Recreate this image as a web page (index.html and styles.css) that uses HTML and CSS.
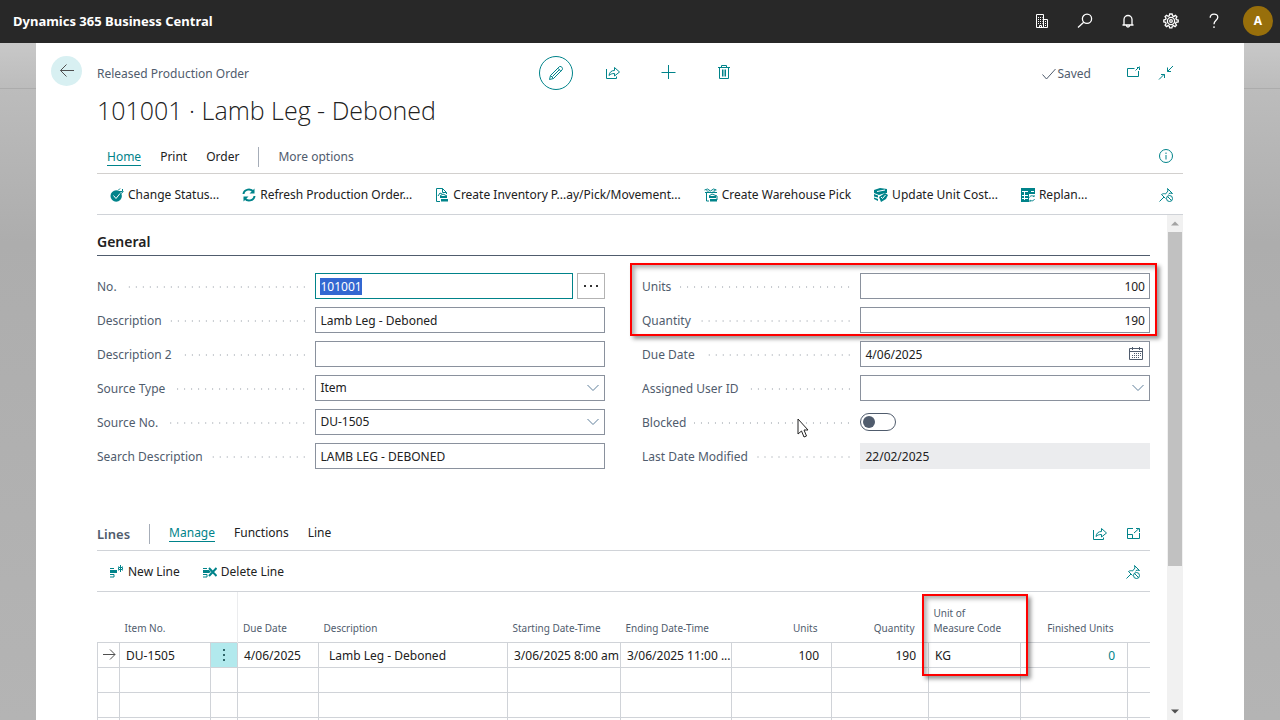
FILE: index.html
```html
<!DOCTYPE html>
<html lang="en">
<head>
    <meta charset="UTF-8">
    <meta name="viewport" content="width=device-width, initial-scale=1.0">
    <title>Released Production Order - Dynamics 365 Business Central</title>
    <link rel="stylesheet" href="styles.css">
</head>
<body>
    <!-- Shared icons -->
    <svg class="sprite" aria-hidden="true">
        <symbol id="i-share" viewBox="0 0 16 16">
            <path d="M1.500 4v9.500h10v-2M4 10.500c.5-3.500 2.500-5 5.500-5V2.500L14.500 7l-5 4V8.500c-2.500 0-4 .5-5.500 2z"/>
        </symbol>
        <symbol id="i-pin" viewBox="0 0 16 16">
            <path d="M1.500 14.500 6 10M3.500 7.500l4 4M3.500 7.500c1.500-1 3-1 4-.5l2.500-3-.5-2.500 5 5-2.500-.5-1.500 1.200"/>
            <circle cx="11.500" cy="11.500" r="3"/>
            <path d="m9.500 9.500 4 4"/>
        </symbol>
        <symbol id="i-chevron" viewBox="0 0 12 8">
            <path d="m.5 1 5.500 5.500L11.500 1"/>
        </symbol>
    </svg>

    <header class="topbar">
        <b class="brand">Dynamics 365 Business Central</b>
        <nav class="topbar-icons">
            <button type="button" aria-label="Company">
                <svg class="icon" viewBox="0 0 16 16"><path d="M2.500 1.500h7v13h-7zM9.500 6.500h4v8h-4M5.500 14.500v-2h2v2"/><path stroke-dasharray="1 1" d="M4 4.500h4.500M4 6.500h4.500M4 8.500h4.500M4 10.500h4.500M11.500 8v5"/></svg>
            </button>
            <button type="button" aria-label="Search">
                <svg class="icon bold" viewBox="0 0 16 16"><circle cx="10" cy="5.800" r="4.600"/><path d="M6.700 9.200 1 14.500"/></svg>
            </button>
            <button type="button" aria-label="Notifications">
                <svg class="icon bold" viewBox="0 0 16 16"><path d="M2.500 12h11M4 12V6.500a4 4 0 0 1 8 0V12M6.500 12.500c0 2 3 2 3 0"/></svg>
            </button>
            <button type="button" aria-label="Settings">
                <svg class="icon bold" viewBox="0 0 16 16"><path d="m6.700 1-.4 1.800-1.200.5-1.600-1-1.400 1.400 1 1.600-.5 1.200L.8 7v2l1.800.4.5 1.200-1 1.600 1.400 1.400 1.600-1 1.200.5.400 1.800h2.200l.4-1.800 1.200-.5 1.600 1 1.400-1.400-1-1.600.5-1.200L15.200 9V7l-1.800-.4-.5-1.200 1-1.600-1.400-1.400-1.600 1-1.200-.5L9.100 1z"/><circle cx="8" cy="8" r="3.600"/><circle cx="8" cy="8" r="1.300"/></svg>
            </button>
            <button type="button" aria-label="Help">
                <svg class="icon bold" viewBox="0 0 16 16"><path d="M4.200 4.800c0-5 7.600-4.800 7.600-.6 0 3-3.800 3.300-3.800 7M8 13.200V15"/></svg>
            </button>
        </nav>
        <button type="button" class="avatar">A</button>
    </header>

    <div class="backdrop">
        <main class="page">
            <div class="gutter">
                <button type="button" class="back-button" aria-label="Back">
                    <svg class="icon" viewBox="0 0 16 16"><path d="M15 7.500H1.500M7.500 1.500l-6 6 6 6"/></svg>
                </button>
            </div>

            <div class="content">
                <div class="page-header">
                    <span class="page-type">Released Production Order</span>
                    <div class="page-tools">
                        <button type="button" class="edit-button" aria-label="Edit">
                            <svg class="icon" viewBox="0 0 16 16"><path d="m1.500 14.500 1-4L11 2c1.500-1.800 4.800 1 3 3l-8.500 8.500zM2.500 10.500l3 3M9.800 3.200l3 3M4.500 11.500l7-7"/></svg>
                        </button>
                        <button type="button" aria-label="Share"><svg class="icon"><use href="#i-share"/></svg></button>
                        <button type="button" aria-label="New"><svg class="icon" viewBox="0 0 16 16"><path d="M7.500 0v14M.5 7.500h14"/></svg></button>
                        <button type="button" aria-label="Delete"><svg class="icon" viewBox="0 0 16 16"><path d="M1 2.500h12M4.500 2V.5h5V2M2.500 2.500v11h9v-11M5.500 4.500v7M7 4.500v7M8.500 4.500v7"/></svg></button>
                    </div>
                    <div class="page-status">
                        <span class="saved"><svg class="icon" viewBox="0 0 16 16"><path d="m1.500 8.500 4 4.500 9-10"/></svg>Saved</span>
                        <button type="button" aria-label="Open in new window"><svg class="icon" viewBox="0 0 16 16"><path d="M9.500 3.500h-7v8h11V6M10.500 5.500l4-4M12 2.500h2.500V5"/></svg></button>
                        <button type="button" aria-label="Collapse"><svg class="icon" viewBox="0 0 16 16"><path d="m15 1-5.500 5.500M9.500 2.500v4H13M1 14.500l5.500-5.500M3 9.500h3.500V13"/></svg></button>
                    </div>
                </div>

                <h1 class="page-title">101001 · Lamb Leg - Deboned</h1>

                <nav class="tabs">
                    <a href="#" class="tab active">Home</a>
                    <a href="#" class="tab">Print</a>
                    <a href="#" class="tab">Order</a>
                    <span class="divider"></span>
                    <a href="#" class="tab muted">More options</a>
                    <button type="button" class="push-right" aria-label="Details"><svg class="icon" viewBox="0 0 16 16"><circle cx="8" cy="7" r="6.500"/><path d="M8 6v4.500M8 3.500V5"/></svg></button>
                </nav>

                <div class="actions">
                    <button type="button" class="action">
                        <svg class="icon small" viewBox="0 0 14 14"><circle class="fill" cx="6.200" cy="8" r="5.700"/><path class="white" d="m3.500 7.500 2.500 3 4-5"/><path d="m8 2.500 2-2M9 3.500h3.500V1M11 5.500l2.500-2"/></svg>Change Status...
                    </button>
                    <button type="button" class="action">
                        <svg class="icon small thick" viewBox="0 0 14 14"><path d="M1.500 6c.5-5 7.500-6 10-2M12.500 8c-.5 5-7.500 6-10 2"/><path class="fill" d="M12.500.5v5h-5zM1.500 13.500v-5h5z"/></svg>Refresh Production Order...
                    </button>
                    <button type="button" class="action">
                        <svg class="icon small" viewBox="0 0 14 14"><path d="M5 13.500H1.500V.5h6l4 4V6M7.500.5v4h4M3 8l2-3 2 1"/><path class="fill" d="M5 8h7v2H5zM6 11h7v2.500H6z"/><path d="m5 8 3-2 4 2"/></svg>Create Inventory P...ay/Pick/Movement...
                    </button>
                    <button type="button" class="action">
                        <svg class="icon small" viewBox="0 0 14 14"><path d="m.5 2 3-1 3 2 3-2 3 1M1 4.500h12M2.500 5v8H5"/><path class="fill" d="M5 8h7v2H5zM6 11h7v2.500H6zM2 2l4 1.500H3zM8 3.500l4-2-1 2z"/><path d="m5 8 3-2 5 2v4"/></svg>Create Warehouse Pick
                    </button>
                    <button type="button" class="action">
                        <svg class="icon small" viewBox="0 0 14 14"><path class="fill" d="m0 2 6-2 7 1v4h-2L5 7 0 5zM0 6l4 1.500v2L0 8.500zM0 9.500l4 1.500v2l-4-2zM5 9l6-4 3 2-2 4-5 3z"/><path class="white" d="m3 3.500 8-1.500M7 9l1.500 1.500 3-3.500"/></svg>Update Unit Cost...
                    </button>
                    <button type="button" class="action">
                        <svg class="icon small" viewBox="0 0 14 14"><path class="fill" d="M0 0h14v6H8v8H0z"/><path class="white" d="M1 3.500h6M1 7.500h6M1 10.500h6M3.500 3v9M10 3.500h3"/><path d="M8.500 9.500c1-2.500 3.500-2 4.500-.5V7M13.500 11c-1 2.500-3.500 2-4.500 1v2"/></svg>Replan...
                    </button>
                    <button type="button" class="push-right" aria-label="Unpin"><svg class="icon"><use href="#i-pin"/></svg></button>
                </div>

                <div class="scroll-area">
                    <div class="scroll-content">
                        <section>
                            <h2 class="section-title">General</h2>
                            <form class="fields">
                                <div class="field-column">
                                    <div class="field">
                                        <label for="no">No.</label>
                                        <div class="control with-assist">
                                            <input type="text" id="no" value="101001" autofocus>
                                            <button type="button" class="assist" aria-label="Choose"><svg viewBox="0 0 16 4"><path d="M1 1h2v2H1zM7 1h2v2H7zM13 1h2v2h-2z"/></svg></button>
                                        </div>
                                    </div>
                                    <div class="field">
                                        <label for="description">Description</label>
                                        <div class="control"><input type="text" id="description" value="Lamb Leg - Deboned"></div>
                                    </div>
                                    <div class="field">
                                        <label for="description2">Description 2</label>
                                        <div class="control"><input type="text" id="description2"></div>
                                    </div>
                                    <div class="field">
                                        <label for="source-type">Source Type</label>
                                        <div class="control">
                                            <select id="source-type"><option>Item</option></select>
                                            <svg class="chevron"><use href="#i-chevron"/></svg>
                                        </div>
                                    </div>
                                    <div class="field">
                                        <label for="source-no">Source No.</label>
                                        <div class="control">
                                            <select id="source-no"><option>DU-1505</option></select>
                                            <svg class="chevron"><use href="#i-chevron"/></svg>
                                        </div>
                                    </div>
                                    <div class="field">
                                        <label for="search-description">Search Description</label>
                                        <div class="control"><input type="text" id="search-description" value="LAMB LEG - DEBONED"></div>
                                    </div>
                                </div>

                                <div class="field-column">
                                    <div class="highlight-group">
                                        <div class="field">
                                            <label for="units">Units</label>
                                            <div class="control"><input type="text" class="number" id="units" value="100"></div>
                                        </div>
                                        <div class="field">
                                            <label for="quantity">Quantity</label>
                                            <div class="control"><input type="text" class="number" id="quantity" value="190"></div>
                                        </div>
                                        <span class="highlight"></span>
                                    </div>
                                    <div class="field">
                                        <label for="due-date">Due Date</label>
                                        <div class="control">
                                            <input type="text" id="due-date" value="4/06/2025">
                                            <svg class="calendar" viewBox="0 0 16 16"><path d="M1.500 2.500h13v11h-13zM1.500 5.500h13M4.500 1v3M11.500 1v3"/><path stroke-dasharray="1 1" d="M6 7.500h7M4 9.500h9M4 11.500h7"/></svg>
                                        </div>
                                    </div>
                                    <div class="field">
                                        <label for="assigned-user">Assigned User ID</label>
                                        <div class="control">
                                            <select id="assigned-user"><option></option></select>
                                            <svg class="chevron"><use href="#i-chevron"/></svg>
                                        </div>
                                    </div>
                                    <div class="field">
                                        <label for="blocked">Blocked</label>
                                        <div class="control"><input type="checkbox" class="toggle" id="blocked"></div>
                                        <svg class="pointer" viewBox="0 0 12 20"><path d="M1 1v15l3.500-3 2.500 6 2.500-1-2.500-6H11z"/></svg>
                                    </div>
                                    <div class="field">
                                        <label for="last-modified">Last Date Modified</label>
                                        <div class="control"><input type="text" id="last-modified" value="22/02/2025" readonly></div>
                                    </div>
                                </div>
                            </form>
                        </section>

                        <section class="lines">
                            <div class="lines-header">
                                <h2 class="lines-title">Lines</h2>
                                <span class="divider"></span>
                                <a href="#" class="tab active">Manage</a>
                                <a href="#" class="tab">Functions</a>
                                <a href="#" class="tab">Line</a>
                                <button type="button" class="push-right" aria-label="Share"><svg class="icon"><use href="#i-share"/></svg></button>
                                <button type="button" aria-label="Expand"><svg class="icon" viewBox="0 0 16 16"><path d="M14.500 7v5.500h-12v-10H8M2.500 8.500h5v4M9 7l5-4.500M11 2.500h3.500V6"/></svg></button>
                            </div>

                            <div class="actions">
                                <button type="button" class="action">
                                    <svg class="icon small" viewBox="0 0 14 14"><path class="fill" d="M0 5h7v3H0z"/><path d="M0 3.500h4M0 9.500h4V12H0M8.500 1.500l4 4M12.500 1.500l-4 4M10.500 0v7M8.500 2.500h4v2h-4z"/></svg>New Line
                                </button>
                                <button type="button" class="action">
                                    <svg class="icon small" viewBox="0 0 14 14"><path class="fill" d="M0 5h6l2 2-2 1H0z"/><path d="M0 3.500h4M0 9.500h4V12H0"/><path class="cross" d="m6 3 7.500 8M13.500 3 6 11"/></svg>Delete Line
                                </button>
                                <button type="button" class="push-right" aria-label="Unpin"><svg class="icon"><use href="#i-pin"/></svg></button>
                            </div>

                            <table class="lines-table">
                                <colgroup>
                                    <col class="c-marker"><col class="c-item"><col class="c-menu"><col class="c-due"><col class="c-desc"><col class="c-start">
                                    <col class="c-end"><col class="c-units"><col class="c-qty"><col class="c-uom"><col class="c-finished"><col>
                                </colgroup>
                                <thead>
                                    <tr>
                                        <th></th>
                                        <th>Item No.</th>
                                        <th class="frozen"></th>
                                        <th>Due Date</th>
                                        <th>Description</th>
                                        <th>Starting Date-Time</th>
                                        <th>Ending Date-Time</th>
                                        <th class="number">Units</th>
                                        <th class="number">Quantity</th>
                                        <th class="marked">Unit of<br>Measure Code<span class="highlight"></span></th>
                                        <th class="number">Finished Units</th>
                                        <th></th>
                                    </tr>
                                </thead>
                                <tbody>
                                    <tr>
                                        <td class="center"><svg class="icon row-arrow" viewBox="0 0 14 14"><path d="M1 6.500h12M8 1.500l5 5-5 5"/></svg></td>
                                        <td>DU-1505</td>
                                        <td class="row-menu"><button type="button" aria-label="Row menu"><svg viewBox="0 0 4 14"><path d="M1 1h2v2H1zM1 6h2v2H1zM1 11h2v2H1z"/></svg></button></td>
                                        <td>4/06/2025</td>
                                        <td class="indent">Lamb Leg - Deboned</td>
                                        <td>3/06/2025 8:00 am</td>
                                        <td>3/06/2025 11:00 ...</td>
                                        <td class="number">100</td>
                                        <td class="number">190</td>
                                        <td>KG</td>
                                        <td class="number"><a href="#">0</a></td>
                                        <td></td>
                                    </tr>
                                    <tr><td></td><td></td><td></td><td></td><td></td><td></td><td></td><td></td><td></td><td></td><td></td><td></td></tr>
                                    <tr><td></td><td></td><td></td><td></td><td></td><td></td><td></td><td></td><td></td><td></td><td></td><td></td></tr>
                                    <tr><td></td><td></td><td></td><td></td><td></td><td></td><td></td><td></td><td></td><td></td><td></td><td></td></tr>
                                </tbody>
                            </table>
                        </section>
                    </div>

                    <div class="scrollbar" aria-hidden="true">
                        <svg class="up" viewBox="0 0 16 16"><path d="m4 10 4-4 4 4z"/></svg>
                        <div class="track"><div class="thumb"></div></div>
                        <svg class="down" viewBox="0 0 16 16"><path d="m4 6 4 4 4-4z"/></svg>
                    </div>
                </div>
            </div>
        </main>
    </div>

<script src="script.js"></script>
</body>
</html>
```

FILE: script.js
```js
// Open the card with the number ready to be typed over
const noField = document.getElementById("no");
noField.focus();
noField.select();
```

FILE: styles.css
```css
* {
    box-sizing: border-box;
}

body {
    margin: 0;
    height: 100vh;
    display: flex;
    flex-direction: column;
    overflow: hidden;
    font-family: "Segoe UI", "Noto Sans", sans-serif;
    font-size: 12px;
    line-height: 16px;
    color: #212121;
}

button,
input,
select {
    font: inherit;
    color: inherit;
}

button {
    display: flex;
    align-items: center;
    justify-content: center;
    padding: 0;
    border: none;
    background: none;
    color: #00838a; /* Teal used by every action icon */
    cursor: pointer;
}

a {
    color: inherit;
    text-decoration: none;
}

.sprite {
    display: none;
}

.icon {
    width: 16px;
    height: 16px;
    flex: none;
    fill: none;
    stroke: currentColor;
}

.icon.small {
    width: 14px;
    height: 14px;
    color: #00838a;
}

.icon.bold {
    stroke-width: 1.3;
}

.icon.thick {
    stroke-width: 2;
}

.icon .fill {
    fill: currentColor;
    stroke: none;
}

.icon .white {
    stroke: white;
}

.icon .cross {
    stroke-width: 2;
}

.push-right {
    margin-left: auto;
}

/* Top bar */
.topbar {
    display: flex;
    align-items: center;
    flex: none;
    height: 43px;
    padding: 0 7px 2px 13px;
    background-color: #282828;
    color: white;
}

.brand {
    font-size: 13px;
    font-weight: 700;
}

.topbar-icons {
    display: flex;
    margin-left: auto;
    margin-right: 8px;
}

.topbar-icons button {
    width: 43px;
    height: 41px;
    color: white;
}

.avatar {
    width: 30px;
    height: 30px;
    border-radius: 50%;
    background-color: #986f0b;
    color: white;
    font-weight: 700;
}

/* Dimmed page behind the card */
.backdrop {
    flex: 1;
    min-height: 0;
    display: flex;
    padding: 0 36px;
    background:
        linear-gradient(#acacac, #acacac) no-repeat 0 45px / 100% 1px,
        linear-gradient(#c8c8c8, #bcbcbc 45px, #adadad 200px, #b4b4b4);
}

.page {
    flex: 1;
    min-width: 0;
    display: flex;
    padding-right: 61px;
    background-color: white;
}

.gutter {
    width: 61px;
    flex: none;
    padding: 13px 15px;
}

.back-button {
    width: 31px;
    height: 30px;
    border-radius: 50%;
    background-color: #d8f0f2;
    color: #505050;
}

.content {
    flex: 1;
    min-width: 0;
    display: flex;
    flex-direction: column;
    padding-top: 13px;
}

.page-header {
    display: grid;
    grid-template-columns: 1fr auto 1fr;
    align-items: center;
    height: 34px;
    color: #505c6d;
}

.page-type,
.saved {
    padding-top: 2px;
}

.page-tools {
    display: flex;
    align-items: center;
    gap: 24px;
}

.page-tools button {
    width: 32px;
    height: 32px;
}

.page-tools .edit-button {
    width: 34px;
    height: 34px;
    border: 1px solid #00838a;
    border-radius: 50%;
}

.page-status {
    display: flex;
    align-items: center;
    justify-content: flex-end;
    padding-right: 9px;
}

.saved {
    display: flex;
    align-items: center;
    margin-right: 34px;
}

.page-status button + button {
    margin-left: 17px;
}

.page-title {
    margin: 0;
    font-family: "Segoe UI", "Open Sans", sans-serif;
    font-size: 25px;
    font-weight: 300;
    line-height: 40px;
}

/* Tabs */
.tabs {
    display: flex;
    align-items: center;
    gap: 19px;
    height: 44px;
    padding: 11px 9px 0 10px;
    border-bottom: 1px solid #d2d0ce;
}

.tab {
    border-bottom: 1px solid transparent;
}

.tab.active {
    color: #00838a;
    border-bottom-color: #00838a;
}

.tab.muted {
    color: #505c6d;
}

.divider {
    width: 1px;
    height: 20px;
    background-color: #a6adb8;
}

/* Action strip */
.actions {
    display: flex;
    align-items: center;
    gap: 23px;
    height: 41px;
    padding: 2px 9px 0 13px;
    border-bottom: 1px solid #d0d3d8;
}

.action {
    gap: 4px;
    color: #212121;
    white-space: nowrap;
}

/* Scrolling part of the card */
.scroll-area {
    flex: 1;
    min-height: 0;
    display: flex;
}

.scroll-content {
    flex: 1;
    min-width: 0;
    padding-right: 17px;
    overflow: hidden;
}

.scrollbar {
    width: 16px;
    display: flex;
    flex-direction: column;
    background-color: #f1f1f1;
}

.scrollbar svg {
    width: 16px;
    height: 17px;
    fill: #505050;
}

.scrollbar .up {
    fill: #a3a3a3;
}

.track {
    flex: 1;
    padding: 0 1px;
}

.thumb {
    height: 71%;
    background-color: #c1c1c1;
}

.section-title {
    margin: 0;
    padding-top: 14px;
    border-bottom: 1px solid #505c6d;
    font-size: 14px;
    font-weight: 600;
    line-height: 26px;
}

/* Fields */
.fields {
    display: grid;
    grid-template-columns: 1fr 1fr;
    column-gap: 37px;
    padding-top: 17px;
}

.field-column,
.highlight-group {
    display: flex;
    flex-direction: column;
    gap: 8px;
}

.field {
    position: relative;
    display: flex;
    align-items: center;
    height: 26px;
}

.field label {
    display: flex;
    align-items: center;
    width: 43%;
    padding-top: 2px;
    color: #505c6d;
    white-space: nowrap;
}

/* Dotted leader between the caption and its value */
.field label::after {
    content: "";
    flex: 1;
    height: 2px;
    margin: 0 8px;
    background: radial-gradient(circle, #c4c8cd 1px, transparent 1px) right / 7px 2px;
}

.control {
    position: relative;
    display: flex;
    align-items: center;
    width: 57%;
    height: 26px;
}

.control input[type="text"],
.control select {
    flex: 1;
    min-width: 0;
    height: 26px;
    margin: 0;
    padding: 0 4px;
    border: 1px solid #8a919d;
    border-radius: 0;
    background-color: white;
    outline: none;
    appearance: none;
}

.control input[type="text"]:focus {
    border-color: #00838a;
}

.control input::selection {
    background-color: #3367d1;
    color: white;
}

.control input.number {
    text-align: right;
}

.control input[readonly] {
    border-color: #ebecee;
    background-color: #ebecee;
}

.with-assist {
    gap: 4px;
}

.assist {
    width: 28px;
    height: 26px;
    border: 1px solid #b3b3b3;
}

.assist svg {
    width: 16px;
    height: 4px;
    fill: #333333;
}

.chevron {
    position: absolute;
    right: 6px;
    width: 12px;
    height: 8px;
    fill: none;
    stroke: #5f7f9a;
    pointer-events: none;
}

.calendar {
    position: absolute;
    right: 6px;
    width: 16px;
    height: 16px;
    fill: none;
    stroke: #505c6d;
}

.toggle {
    display: flex;
    align-items: center;
    width: 36px;
    height: 18px;
    margin: 0;
    padding: 0 2px;
    border: 1px solid #505c6d;
    border-radius: 9px;
    appearance: none;
}

.toggle::before {
    content: "";
    width: 12px;
    height: 12px;
    border-radius: 50%;
    background-color: #505c6d;
}

.toggle:checked {
    justify-content: flex-end;
}

.pointer {
    position: absolute;
    left: 155px;
    top: 9px;
    width: 12px;
    height: 20px;
    fill: white;
    stroke: #222222;
}

/* Red call-outs */
.highlight-group {
    position: relative;
}

.highlight {
    position: absolute;
    inset: -10px -7px -3px -12px;
    border: 2px solid #ff0000;
    box-shadow: 3px 3px 4px rgba(0, 0, 0, 0.4), inset 3px 3px 4px rgba(0, 0, 0, 0.3);
    pointer-events: none;
}

/* Lines */
.lines {
    padding-top: 48px;
}

.lines-header {
    display: flex;
    align-items: center;
    gap: 19px;
    height: 34px;
    padding-right: 9px;
    border-bottom: 1px solid #d0d3d8;
}

.lines-header .push-right + button {
    margin-left: -2px;
}

.lines-title {
    margin: 0;
    font-size: 13px;
    font-weight: 600;
    color: #505c6d;
}

.lines-table {
    width: 100%;
    table-layout: fixed;
    border-collapse: collapse;
}

.c-marker { width: 22px; }
.c-item { width: 91px; }
.c-menu { width: 27px; }
.c-due { width: 81px; }
.c-desc { width: 189px; }
.c-start { width: 113px; }
.c-end { width: 111px; }
.c-units { width: 100px; }
.c-qty { width: 97px; }
.c-uom { width: 92px; }
.c-finished { width: 107px; }

.lines-table th {
    height: 50px;
    padding: 0 14px 6px 5px;
    vertical-align: bottom;
    text-align: left;
    font-size: 10px;
    font-weight: 400;
    line-height: 15px;
    color: #505c6d;
    white-space: nowrap;
}

.lines-table th.frozen {
    border-right: 1px solid #ebecee;
}

.lines-table td {
    height: 25px;
    padding: 3px 12px 0 6px;
    border: 1px solid #d0d3d8;
    white-space: nowrap;
}

.lines-table td:last-child {
    border-right: none;
}

.lines-table td:nth-child(6),
.lines-table td:nth-child(7) {
    padding-right: 0;
}

.lines-table .number {
    text-align: right;
}

.lines-table td.indent {
    padding-left: 10px;
}

.lines-table td.center {
    padding: 0 0 0 4px;
}

.lines-table td a {
    color: #00838a;
}

.row-arrow {
    display: block;
    width: 14px;
    height: 14px;
    color: #505050;
}

.lines-table td.row-menu {
    padding: 0;
    background-color: #b2e9ed;
}

.row-menu button {
    width: 100%;
    height: 24px;
}

.row-menu svg {
    width: 4px;
    height: 14px;
    fill: #30666a;
}

.marked {
    position: relative;
}

.marked .highlight {
    inset: 2px -7px auto -7px;
    height: 82px;
}
```
